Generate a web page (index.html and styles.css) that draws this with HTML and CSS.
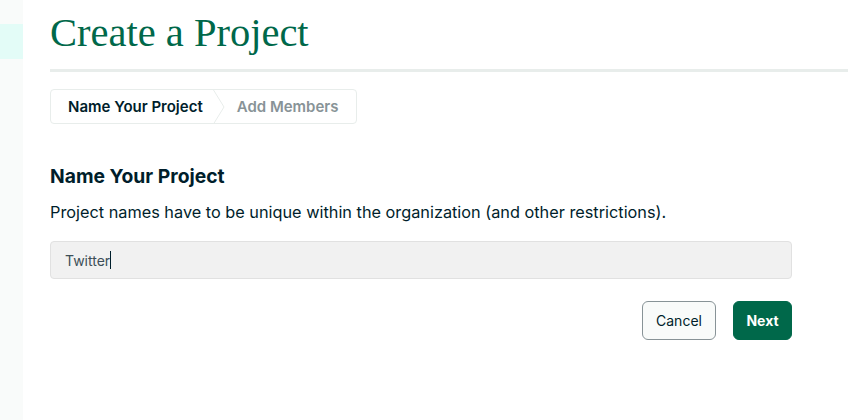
FILE: index.html
```html
<!DOCTYPE html>
<html lang="en">
<head>
<meta charset="utf-8">
<title>Create a Project</title>
<link rel="stylesheet" href="styles.css">
</head>
<body>
<div class="app">
  <aside class="sidebar">
    <div class="side-item"></div>
  </aside>
  <main class="main">
    <h1 class="title">Create a Project</h1>
    <div class="divider"></div>
    <nav class="stepper">
      <div class="step step-active">Name Your Project</div>
      <svg class="chev" width="12" height="34" viewBox="0 0 12 34"><path d="M0.5 0 L11 17 L0.5 34" fill="none" stroke="#e8edeb" stroke-width="1"/></svg>
      <div class="step step-next">Add Members</div>
    </nav>
    <h2 class="section">Name Your Project</h2>
    <p class="desc">Project names have to be unique within the organization (and other restrictions).</p>
    <div class="input"><span class="value">Twitter</span><span class="caret"></span></div>
    <div class="actions">
      <button class="btn btn-cancel">Cancel</button>
      <button class="btn btn-next">Next</button>
    </div>
  </main>
</div>
</body>
</html>
```
FILE: styles.css
```css
* { box-sizing: border-box; }
html, body { margin: 0; padding: 0; background: #fff; }
body { font-family: "Inter", "Liberation Sans", sans-serif; color: #001e2b; }
.app { display: flex; min-height: 420px; }
.sidebar { width: 23px; background: #f9fbfa; padding-top: 24px; flex-shrink: 0; }
.side-item { height: 35px; background: #e3fcf7; }
.main { flex: 1; padding-left: 27px; }
.title {
  margin: 0; padding-top: 10px;
  font-family: "Liberation Serif", serif; font-weight: 400;
  font-size: 40.5px; line-height: 46px; color: #00684a;
}
.divider { height: 3px; background: #e8edeb; margin-top: 13px; }
.stepper {
  display: inline-flex; align-items: center; margin-top: 17px;
  height: 35px; border: 1px solid #e8edeb; border-radius: 4px;
}
.step { font-size: 15px; font-weight: 600; line-height: 33px; }
.step-active { padding-left: 17px; padding-right: 10px; color: #001e2b; }
.step-next { padding-left: 12px; padding-right: 17px; color: #889397; }
.chev { display: block; }
.section { margin: 40px 0 0; font-size: 19.3px; font-weight: 700; line-height: 24px; }
.desc { margin: 12px 0 0; font-size: 16.3px; line-height: 25px; }
.input {
  display: flex; align-items: center; margin-top: 16px; width: 742px; height: 38px;
  background: #f1f1f1; border: 1px solid #e1e1e1; border-radius: 4px; padding-left: 14px;
  font-size: 14px; color: #3d4f58;
}
.caret { width: 1px; height: 18px; background: #001e2b; }
.actions { display: flex; justify-content: flex-end; gap: 17px; width: 742px; margin-top: 22px; }
.btn { height: 39px; border-radius: 6px; font-family: inherit; font-size: 14px; cursor: pointer; }
.btn-cancel { width: 74px; background: #f9fbfa; border: 1px solid #889397; color: #001e2b; }
.btn-next { width: 59px; background: #00684a; border: 1px solid #00684a; color: #fff; font-weight: 700; }
```
